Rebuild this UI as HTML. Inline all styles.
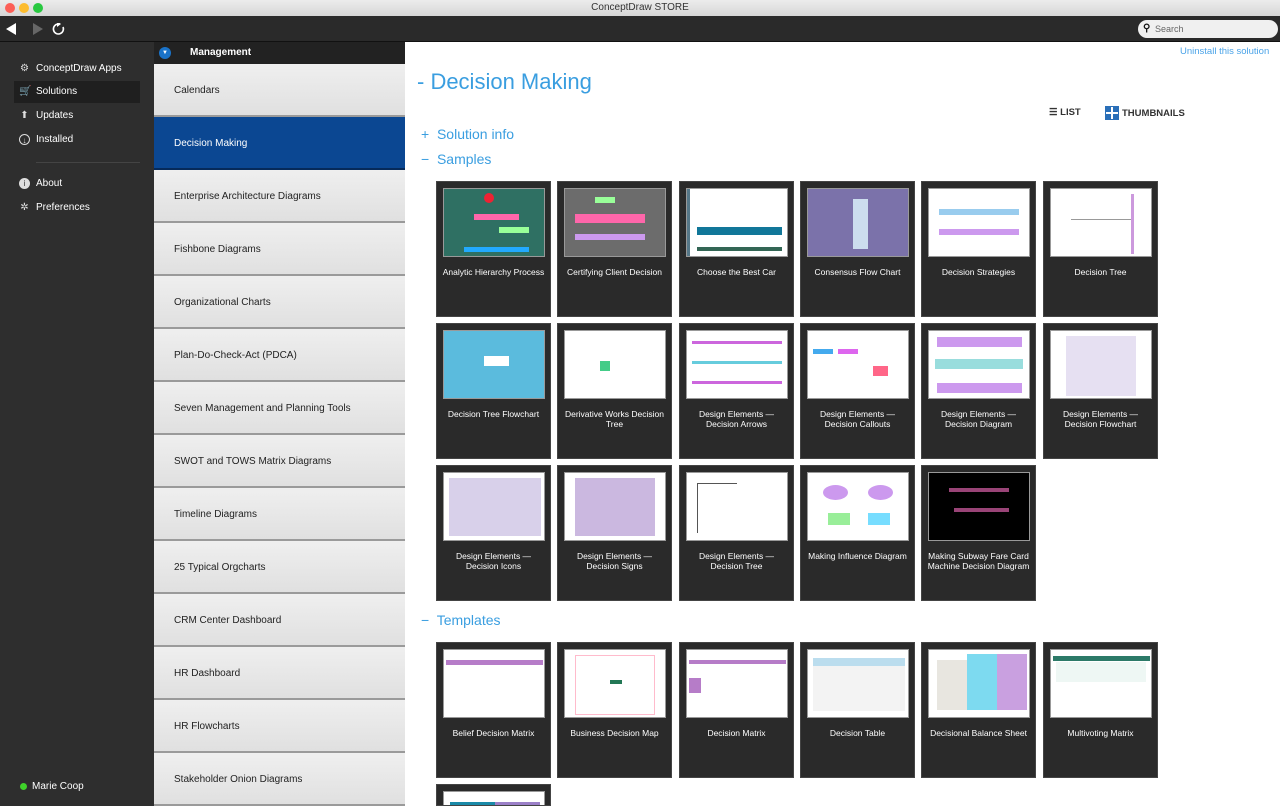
<!DOCTYPE html>
<html style="width:1280px;height:806px;overflow:hidden"><head><meta charset="utf-8"><style>
*{box-sizing:border-box;margin:0;padding:0}
body{width:1280px;height:806px;overflow:hidden;font-family:"Liberation Sans",sans-serif;background:#fff;position:relative}
.abs{position:absolute}
#title{left:0;top:0;width:1280px;height:16px;background:linear-gradient(#ececec,#d6d6d6);text-align:center;font-size:10px;line-height:16px;color:#333}
.dot{position:absolute;top:3px;width:10px;height:10px;border-radius:50%}
#tool{left:0;top:16px;width:1280px;height:26px;background:#2a2a2a;border-bottom:1px solid #111}
#left{left:0;top:42px;width:154px;height:764px;background:#2e2e2e}
.nav{position:absolute;left:14px;width:126px;height:22px;color:#fff;font-size:10px;line-height:22px;padding-left:22px}
.nav i{position:absolute;left:5px;top:5px;width:11px;height:11px;font-style:normal;font-size:10px;line-height:11px;text-align:center;color:#ddd}
#mid{left:154px;top:42px;width:251px;height:764px;background:#e6e6e6;overflow:hidden}
#mhead{left:0;top:0;width:251px;height:22px;background:#222;color:#fff;font-size:10px;font-weight:bold;line-height:22px;padding-left:36px}
.it{position:absolute;left:0;width:251px;height:53px;background:linear-gradient(#efefef,#e0e0e0);border-bottom:2px solid #9a9a9a;font-size:10px;color:#222;line-height:54px;padding-left:20px}
.it.sel{background:#0b4792;color:#fff;border-bottom:2px solid #062a5a}
.h{position:absolute;color:#3a9ee0;font-size:14px}
.tile{position:absolute;width:115px;height:136px;background:#2a2a2a;border:1px solid #444;overflow:hidden}
.th{position:absolute;left:6px;top:6px;width:102px;height:69px;background:#fff;border:1px solid #999;overflow:hidden}
.lb{position:absolute;left:0;top:85px;width:113px;text-align:center;color:#fff;font-size:8.5px;line-height:10px}
.th b{position:absolute;display:block}
</style></head><body>
<div id="title" class="abs">ConceptDraw STORE
<div class="dot" style="left:5px;background:#fc5f57"></div><div class="dot" style="left:19px;background:#fdbc2e"></div><div class="dot" style="left:33px;background:#28c840"></div></div>
<div id="tool" class="abs">
<svg class="abs" style="left:6px;top:7px" width="60" height="14"><path d="M0 6 L10 0 L10 12Z" fill="#fff"/><path d="M27 0 L37 6 L27 12Z" fill="#666"/><path d="M57 4 A5 5 0 1 1 52 1" stroke="#fff" stroke-width="1.6" fill="none"/><path d="M51 -2 L55 1 L51 4Z" fill="#fff"/></svg>
<div class="abs" style="left:1138px;top:4px;width:140px;height:18px;border-radius:9px;background:#f0f0f0;font-size:9px;color:#666;line-height:18px;padding-left:17px">Search<span class="abs" style="left:5px;top:0;font-size:10px;color:#111;font-weight:bold">⚲</span></div>
</div>
<div id="left" class="abs">
<div class="nav" style="top:16px"><i>⚙</i>ConceptDraw Apps</div>
<div class="nav" style="top:39px;background:#1f1f1f"><i>🛒</i>Solutions</div>
<div class="nav" style="top:63px"><i>⬆</i>Updates</div>
<div class="nav" style="top:87px"><i style="border:1px solid #ddd;border-radius:50%;font-size:8px">↓</i>Installed</div>
<div class="abs" style="left:36px;top:120px;width:104px;height:1px;background:#444"></div>
<div class="nav" style="top:131px"><i style="background:#ddd;color:#333;border-radius:50%;font-size:8px">i</i>About</div>
<div class="nav" style="top:155px"><i>✲</i>Preferences</div>
<div class="abs" style="left:20px;top:741px;width:7px;height:7px;border-radius:50%;background:#3fd22a"></div>
<div class="abs" style="left:32px;top:739px;color:#fff;font-size:10px">Marie Coop</div>
</div>
<div id="mid" class="abs">
<div id="mhead" class="abs">Management<div class="abs" style="left:5px;top:5px;width:12px;height:12px;border-radius:50%;background:#1a73c9;color:#fff;font-size:6px;line-height:12px;text-align:center">▼</div></div>
<div class="it" style="top:22px">Calendars</div>
<div class="it sel" style="top:75px">Decision Making</div>
<div class="it" style="top:128px">Enterprise Architecture Diagrams</div>
<div class="it" style="top:181px">Fishbone Diagrams</div>
<div class="it" style="top:234px">Organizational Charts</div>
<div class="it" style="top:287px">Plan-Do-Check-Act (PDCA)</div>
<div class="it" style="top:340px">Seven Management and Planning Tools</div>
<div class="it" style="top:393px">SWOT and TOWS Matrix Diagrams</div>
<div class="it" style="top:446px">Timeline Diagrams</div>
<div class="it" style="top:499px">25 Typical Orgcharts</div>
<div class="it" style="top:552px">CRM Center Dashboard</div>
<div class="it" style="top:605px">HR Dashboard</div>
<div class="it" style="top:658px">HR Flowcharts</div>
<div class="it" style="top:711px">Stakeholder Onion Diagrams</div>
</div>
<div class="abs" style="left:1180px;top:46px;font-size:9.5px;color:#4aa3e8">Uninstall this solution</div>
<div class="abs" style="left:417px;top:69px;font-size:22px;color:#3a9ee0">- Decision Making</div>
<div class="abs" style="left:1049px;top:107px;font-size:9.5px;font-weight:bold;color:#333">☰ LIST</div>
<div class="abs" style="left:1105px;top:106px;width:14px;height:14px;background:#2a6fb8;border:1px solid #2a6fb8"><div style="position:absolute;left:5px;top:0;width:2px;height:12px;background:#fff"></div><div style="position:absolute;left:0;top:5px;width:12px;height:2px;background:#fff"></div></div>
<div class="abs" style="left:1122px;top:108px;font-size:9.5px;font-weight:bold;color:#333">THUMBNAILS</div>
<div class="h" style="left:421px;top:126px">+&nbsp; Solution info</div>
<div class="h" style="left:421px;top:151px">−&nbsp; Samples</div>
<div class="h" style="left:421px;top:612px">−&nbsp; Templates</div>

<div class="tile" style="left:436px;top:181px"><div class="th" style="background:#2f7063"><b style="left:40px;top:4px;width:10px;height:10px;border-radius:50%;background:#e23"></b><b style="left:30px;top:25px;width:45px;height:6px;background:#f6a"></b><b style="left:55px;top:38px;width:30px;height:6px;background:#9f9"></b><b style="left:20px;top:58px;width:65px;height:5px;background:#2af"></b></div><div class="lb">Analytic Hierarchy Process</div></div>
<div class="tile" style="left:557px;top:181px"><div class="th" style="background:#6c6c6c"><b style="left:10px;top:25px;width:70px;height:9px;background:#f6a"></b><b style="left:30px;top:8px;width:20px;height:6px;background:#9f9"></b><b style="left:10px;top:45px;width:70px;height:6px;background:#c9e"></b></div><div class="lb">Certifying Client Decision</div></div>
<div class="tile" style="left:679px;top:181px"><div class="th"><b style="left:0;top:0;width:3px;height:69px;background:#578"></b><b style="left:10px;top:38px;width:85px;height:8px;background:#179"></b><b style="left:10px;top:58px;width:85px;height:4px;background:#365"></b></div><div class="lb">Choose the Best Car</div></div>
<div class="tile" style="left:800px;top:181px"><div class="th" style="background:#7b72aa"><b style="left:45px;top:10px;width:15px;height:50px;background:#cde"></b></div><div class="lb">Consensus Flow Chart</div></div>
<div class="tile" style="left:921px;top:181px"><div class="th"><b style="left:10px;top:20px;width:80px;height:6px;background:#9ce"></b><b style="left:10px;top:40px;width:80px;height:6px;background:#c9e"></b></div><div class="lb">Decision Strategies</div></div>
<div class="tile" style="left:1043px;top:181px"><div class="th"><b style="left:80px;top:5px;width:3px;height:60px;background:#c9d"></b><b style="left:20px;top:30px;width:60px;height:1px;background:#999"></b></div><div class="lb">Decision Tree</div></div>

<div class="tile" style="left:436px;top:323px"><div class="th" style="background:#5bbbdd"><b style="left:40px;top:25px;width:25px;height:10px;background:#fff"></b></div><div class="lb">Decision Tree Flowchart</div></div>
<div class="tile" style="left:557px;top:323px"><div class="th"><b style="left:35px;top:30px;width:10px;height:10px;background:#4c8"></b></div><div class="lb">Derivative Works Decision<br>Tree</div></div>
<div class="tile" style="left:679px;top:323px"><div class="th"><b style="left:5px;top:10px;width:90px;height:3px;background:#c6d"></b><b style="left:5px;top:30px;width:90px;height:3px;background:#6cd"></b><b style="left:5px;top:50px;width:90px;height:3px;background:#c6d"></b></div><div class="lb">Design Elements —<br>Decision Arrows</div></div>
<div class="tile" style="left:800px;top:323px"><div class="th"><b style="left:5px;top:18px;width:20px;height:5px;background:#4ae"></b><b style="left:30px;top:18px;width:20px;height:5px;background:#d6e"></b><b style="left:65px;top:35px;width:15px;height:10px;background:#f68"></b></div><div class="lb">Design Elements —<br>Decision Callouts</div></div>
<div class="tile" style="left:921px;top:323px"><div class="th"><b style="left:8px;top:6px;width:85px;height:10px;background:#c9e"></b><b style="left:6px;top:28px;width:88px;height:10px;background:#9dd"></b><b style="left:8px;top:52px;width:85px;height:10px;background:#c9e"></b></div><div class="lb">Design Elements —<br>Decision Diagram</div></div>
<div class="tile" style="left:1043px;top:323px"><div class="th"><b style="left:15px;top:5px;width:70px;height:60px;background:#e6e0f2"></b></div><div class="lb">Design Elements —<br>Decision Flowchart</div></div>

<div class="tile" style="left:436px;top:465px"><div class="th"><b style="left:5px;top:5px;width:92px;height:58px;background:#d8d0ea"></b></div><div class="lb">Design Elements —<br>Decision Icons</div></div>
<div class="tile" style="left:557px;top:465px"><div class="th"><b style="left:10px;top:5px;width:80px;height:58px;background:#cbb8e0"></b></div><div class="lb">Design Elements —<br>Decision Signs</div></div>
<div class="tile" style="left:679px;top:465px"><div class="th"><b style="left:10px;top:10px;width:1px;height:50px;background:#555"></b><b style="left:10px;top:10px;width:40px;height:1px;background:#555"></b></div><div class="lb">Design Elements —<br>Decision Tree</div></div>
<div class="tile" style="left:800px;top:465px"><div class="th"><b style="left:15px;top:12px;width:25px;height:15px;border-radius:50%;background:#c9e"></b><b style="left:60px;top:12px;width:25px;height:15px;border-radius:50%;background:#c9e"></b><b style="left:20px;top:40px;width:22px;height:12px;background:#9e9"></b><b style="left:60px;top:40px;width:22px;height:12px;background:#7df"></b></div><div class="lb">Making Influence Diagram</div></div>
<div class="tile" style="left:921px;top:465px"><div class="th" style="background:#000"><b style="left:20px;top:15px;width:60px;height:4px;background:#947"></b><b style="left:25px;top:35px;width:55px;height:4px;background:#947"></b></div><div class="lb">Making Subway Fare Card<br>Machine Decision Diagram</div></div>

<div class="tile" style="left:436px;top:642px"><div class="th"><b style="left:2px;top:10px;width:97px;height:5px;background:#b67cc8"></b></div><div class="lb">Belief Decision Matrix</div></div>
<div class="tile" style="left:557px;top:642px"><div class="th"><b style="left:45px;top:30px;width:12px;height:4px;background:#275"></b><b style="left:10px;top:5px;width:80px;height:60px;border:1px solid #fbc"></b></div><div class="lb">Business Decision Map</div></div>
<div class="tile" style="left:679px;top:642px"><div class="th"><b style="left:2px;top:10px;width:97px;height:4px;background:#b67cc8"></b><b style="left:2px;top:28px;width:12px;height:15px;background:#b67cc8"></b></div><div class="lb">Decision Matrix</div></div>
<div class="tile" style="left:800px;top:642px"><div class="th"><b style="left:5px;top:8px;width:92px;height:8px;background:#bde"></b><b style="left:5px;top:16px;width:92px;height:45px;background:#f3f3f3"></b></div><div class="lb">Decision Table</div></div>
<div class="tile" style="left:921px;top:642px"><div class="th"><b style="left:8px;top:10px;width:30px;height:50px;background:#e8e6e0"></b><b style="left:38px;top:4px;width:30px;height:56px;background:#7ddaf0"></b><b style="left:68px;top:4px;width:30px;height:56px;background:#c9a0e0"></b></div><div class="lb">Decisional Balance Sheet</div></div>
<div class="tile" style="left:1043px;top:642px"><div class="th"><b style="left:2px;top:6px;width:97px;height:5px;background:#2c7a68"></b><b style="left:5px;top:12px;width:90px;height:20px;background:#eef7f4"></b></div><div class="lb">Multivoting Matrix</div></div>
<div class="tile" style="left:436px;top:784px;height:22px"><div class="th" style="height:30px"><b style="left:6px;top:10px;width:45px;height:10px;background:#1a8aa8"></b><b style="left:51px;top:10px;width:45px;height:10px;background:#9b80c8"></b></div></div>
</body></html>
